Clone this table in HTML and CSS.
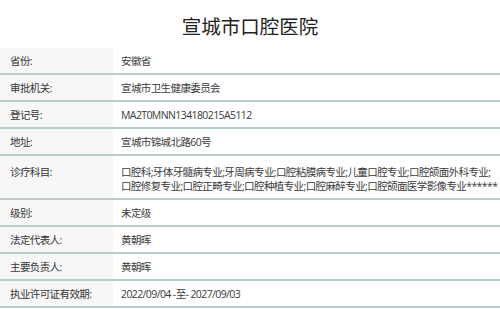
FILE: index.html
```html
<!DOCTYPE html>
<html lang="zh-CN">
<head>
<meta charset="utf-8">
<title>宣城市口腔医院</title>
<link rel="stylesheet" href="styles.css">
</head>
<body>
<div class="page">
  <h1 class="title">宣城市口腔医院</h1>
  <div class="info">
    <div class="row"><div class="label">省份:</div><div class="value">安徽省</div></div>
    <div class="row"><div class="label">审批机关:</div><div class="value">宣城市卫生健康委员会</div></div>
    <div class="row"><div class="label">登记号:</div><div class="value">MA2T0MNN134180215A5112</div></div>
    <div class="row"><div class="label">地址:</div><div class="value">宣城市锦城北路60号</div></div>
    <div class="row row-multi"><div class="label">诊疗科目:</div><div class="value">口腔科;牙体牙髓病专业;牙周病专业;口腔粘膜病专业;儿童口腔专业;口腔颌面外科专业;口腔修复专业;口腔正畸专业;口腔种植专业;口腔麻醉专业;口腔颌面医学影像专业******</div></div>
    <div class="row"><div class="label">级别:</div><div class="value">未定级</div></div>
    <div class="row"><div class="label">法定代表人:</div><div class="value">黄朝晖</div></div>
    <div class="row"><div class="label">主要负责人:</div><div class="value">黄朝晖</div></div>
    <div class="row"><div class="label">执业许可证有效期:</div><div class="value">2022/09/04 -至- 2027/09/03</div></div>
  </div>
</div>
</body>
</html>
```
FILE: styles.css
```css
html, body {
  margin: 0;
  padding: 0;
  background: #ffffff;
}
body {
  font-family: "Open Sans", "Noto Sans CJK SC", sans-serif;
  color: #333333;
}
.page {
  width: 500px;
}
.title {
  margin: 0;
  height: 48px;
  display: flex;
  align-items: center;
  justify-content: center;
  font-family: "Noto Sans CJK SC", sans-serif;
  font-size: 19.5px;
  font-weight: 400;
  color: #222222;
  padding-top: 2px;
  box-sizing: border-box;
}
.info {
  display: flex;
  flex-direction: column;
}
.row {
  display: flex;
  border-bottom: 2px solid #b9cec5;
  font-size: 10.5px;
  letter-spacing: -0.6px;
  line-height: 14px;
}
.label {
  width: 113px;
  flex: none;
  box-sizing: border-box;
  background: #f7f7f7;
  padding: 6px 0 5px 10px;
  color: #333333;
}
.value {
  flex: 1;
  padding: 6px 0 5px 8px;
  color: #3a3a3a;
}
.row-multi .label,
.row-multi .value {
  padding-top: 9px;
  padding-bottom: 5px;
}
```
